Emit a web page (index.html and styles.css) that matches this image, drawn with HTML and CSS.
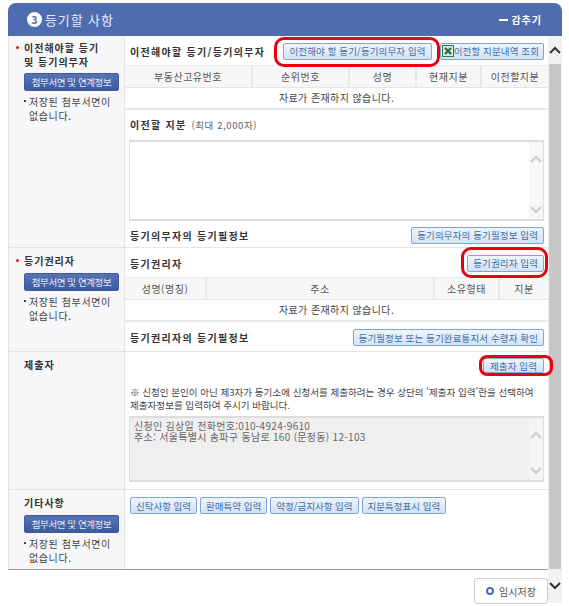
FILE: index.html
```html
<!DOCTYPE html>
<html lang="ko">
<head>
    <meta charset="UTF-8">
    <title>등기할 사항</title>
    <link rel="stylesheet" href="styles.css">
</head>
<body>
    <div class="panel">
        <div class="panel-head">
            <h2><span class="step-num">3</span>등기할 사항</h2>
            <span class="fold"><span class="fold-dash"></span>감추기</span>
        </div>
        <div class="panel-body">
            <div class="main">
                <section class="sec sec-transfer">
                    <div class="side">
                        <p class="side-title req">이전해야할 등기<br>및 등기의무자</p>
                        <button class="attach-btn">첨부서면 및 연계정보</button>
                        <p class="side-note">저장된 첨부서면이<br>없습니다.</p>
                    </div>
                    <div class="cont">
                        <div class="line line-top">
                            <strong>이전해야할 등기/등기의무자</strong>
                            <div class="btns">
                                <span class="ring-wrap">
                                    <button class="btn">이전해야 할 등기/등기의무자 입력</button>
                                    <span class="ring ring-one"></span>
                                </span>
                                <button class="btn btn-excel">
                                    <svg width="12" height="12" viewBox="0 0 12 12"><rect x="0.5" y="0.5" width="11" height="11" fill="#d9e8dc" stroke="#2e7d46"/><path d="M3 3l6 6M9 3l-6 6" stroke="#1d6b38" stroke-width="2"/></svg>
                                    이전할 지분내역 조회
                                </button>
                            </div>
                        </div>
                        <div class="grid grid-a">
                            <div class="th">부동산고유번호</div>
                            <div class="th">순위번호</div>
                            <div class="th">성명</div>
                            <div class="th">현재지분</div>
                            <div class="th">이전할지분</div>
                            <div class="empty">자료가 존재하지 않습니다.</div>
                        </div>
                        <p class="share-title"><strong>이전할 지분</strong> <span>(최대 2,000자)</span></p>
                        <div class="textbox">
                            <div class="textbox-text"></div>
                            <div class="textbox-bar">
                                <svg width="12" height="8" viewBox="0 0 12 8"><path d="M1 7l5-5 5 5" fill="none" stroke="#ccc" stroke-width="2"/></svg>
                                <svg width="12" height="8" viewBox="0 0 12 8"><path d="M1 1l5 5 5-5" fill="none" stroke="#ccc" stroke-width="2"/></svg>
                            </div>
                        </div>
                        <div class="line line-foot">
                            <strong>등기의무자의 등기필정보</strong>
                            <button class="btn">등기의무자의 등기필정보 입력</button>
                        </div>
                    </div>
                </section>

                <section class="sec sec-holder">
                    <div class="side">
                        <p class="side-title req">등기권리자</p>
                        <button class="attach-btn">첨부서면 및 연계정보</button>
                        <p class="side-note">저장된 첨부서면이<br>없습니다.</p>
                    </div>
                    <div class="cont">
                        <div class="line line-top">
                            <strong>등기권리자</strong>
                            <span class="ring-wrap">
                                <button class="btn">등기권리자 입력</button>
                                <span class="ring ring-two"></span>
                            </span>
                        </div>
                        <div class="grid grid-b">
                            <div class="th">성명(명칭)</div>
                            <div class="th">주소</div>
                            <div class="th">소유형태</div>
                            <div class="th">지분</div>
                            <div class="empty">자료가 존재하지 않습니다.</div>
                        </div>
                        <div class="line line-foot2">
                            <strong>등기권리자의 등기필정보</strong>
                            <button class="btn">등기필정보 또는 등기완료통지서 수령자 확인</button>
                        </div>
                    </div>
                </section>

                <section class="sec sec-submit">
                    <div class="side">
                        <p class="side-title">제출자</p>
                    </div>
                    <div class="cont">
                        <div class="line-right">
                            <span class="ring-wrap">
                                <button class="btn">제출자 입력</button>
                                <span class="ring ring-three"></span>
                            </span>
                        </div>
                        <p class="notice">※ 신청인 본인이 아닌 제3자가 등기소에 신청서를 제출하려는 경우 상단의 '제출자 입력'란을 선택하여<br>제출자정보를 입력하여 주시기 바랍니다.</p>
                        <div class="textbox textbox-off">
                            <div class="textbox-text">신청인 김상일 전화번호:010-4924-9610<br>주소: 서울특별시 송파구 동남로 160 (문정동) 12-103</div>
                            <div class="textbox-bar">
                                <svg width="12" height="8" viewBox="0 0 12 8"><path d="M1 7l5-5 5 5" fill="none" stroke="#ccc" stroke-width="2"/></svg>
                                <svg width="12" height="8" viewBox="0 0 12 8"><path d="M1 1l5 5 5-5" fill="none" stroke="#ccc" stroke-width="2"/></svg>
                            </div>
                        </div>
                    </div>
                </section>

                <section class="sec sec-etc">
                    <div class="side">
                        <p class="side-title">기타사항</p>
                        <button class="attach-btn">첨부서면 및 연계정보</button>
                        <p class="side-note">저장된 첨부서면이<br>없습니다.</p>
                    </div>
                    <div class="cont cont-etc">
                        <button class="btn">신탁사항 입력</button>
                        <button class="btn">환매특약 입력</button>
                        <button class="btn">약정/금지사항 입력</button>
                        <button class="btn">지분특정표시 입력</button>
                    </div>
                </section>

                <div class="save-row">
                    <button class="save-btn"><span class="save-dot"></span>임시저장</button>
                </div>
            </div>

            <div class="scrollbar">
                <div class="scroll-arrow scroll-up">
                    <svg width="12" height="8" viewBox="0 0 12 8"><path d="M1 7l5-5 5 5" fill="none" stroke="#333" stroke-width="2"/></svg>
                </div>
                <div class="scroll-thumb"></div>
                <div class="scroll-arrow scroll-down">
                    <svg width="12" height="8" viewBox="0 0 12 8"><path d="M1 1l5 5 5-5" fill="none" stroke="#333" stroke-width="2"/></svg>
                </div>
            </div>
        </div>
    </div>
</body>
</html>
```

FILE: styles.css
```css
* {
    box-sizing: border-box;
}

body {
    margin: 0;
    padding: 3px 0 0 8px;
    background: #fff;
    font-family: "Noto Sans CJK KR", "Noto Sans", sans-serif;
    font-size: 10px;
    color: #444;
}

p {
    margin: 0;
}

button {
    font-family: inherit;
    cursor: pointer;
}

.panel {
    width: 554px;
}

.panel-head {
    height: 33px;
    padding: 0 20px 0 19px;
    display: flex;
    align-items: center;
    justify-content: space-between;
    background: #4e6cae;
    border-radius: 8px 8px 0 0;
    color: #fff;
}

.panel-head h2 {
    margin: 0;
    display: flex;
    align-items: center;
    font-size: 13px;
    font-weight: 400;
    letter-spacing: 0.9px;
    color: #e8edf7;
}

.step-num {
    width: 15px;
    height: 15px;
    margin-right: 3px;
    border-radius: 50%;
    background: #fff;
    color: #4e6cae;
    font-size: 10px;
    font-weight: 700;
    line-height: 15px;
    text-align: center;
    letter-spacing: 0;
}

.fold {
    display: flex;
    align-items: center;
    font-size: 10px;
    font-weight: 700;
    letter-spacing: 1px;
}

.fold-dash {
    width: 9px;
    height: 2px;
    margin-right: 3px;
    background: #fff;
}

.panel-body {
    display: flex;
}

.main {
    width: 540px;
}

.sec {
    display: flex;
    border-bottom: 1px solid #e4e4e4;
}

.sec-transfer {
    height: 212px;
}

.sec-holder {
    height: 104px;
}

.sec-submit {
    height: 138px;
}

.sec-etc {
    height: 80px;
    border-bottom: 1px solid #999;
}

.side {
    width: 117px;
    flex: none;
    padding: 6px 0 0 15px;
    background: #f7f7f9;
    border-left: 1px solid #e4e4e4;
    border-right: 1px solid #e4e4e4;
}

.sec-transfer .side {
    padding-top: 5px;
}

.sec-transfer .attach-btn {
    margin-top: 4px;
}

.side-title {
    position: relative;
    font-weight: 700;
    line-height: 14px;
    color: #333;
    letter-spacing: 1px;
}

.req::before {
    content: "";
    position: absolute;
    left: -8px;
    top: 5px;
    width: 3px;
    height: 3px;
    border-radius: 50%;
    background: #e8131b;
}

.attach-btn {
    display: block;
    width: 95px;
    height: 18px;
    margin: 5px 0 4px;
    padding: 0;
    border: 1px solid #3d5a9c;
    border-radius: 2px;
    background: linear-gradient(#5573b5, #3c5a9f);
    color: #e4e9f5;
    font-size: 9.5px;
    letter-spacing: -0.4px;
    line-height: 16px;
}

.side-note {
    position: relative;
    padding-left: 5px;
    line-height: 13.5px;
    letter-spacing: 0.6px;
}

.side-note::before {
    content: "";
    position: absolute;
    left: 0;
    top: 5px;
    width: 2px;
    height: 2px;
    background: #444;
}

.cont {
    flex: 1;
    min-width: 0;
}

.line {
    display: flex;
    align-items: center;
    justify-content: space-between;
    padding: 0 4px 0 5px;
}

.line strong,
.share-title strong {
    color: #333;
    letter-spacing: 1.3px;
}

.line-top {
    height: 29px;
    padding-top: 1px;
}

.btns {
    display: flex;
    gap: 8px;
}

.btn {
    height: 17px;
    padding: 0 5px;
    display: inline-flex;
    align-items: center;
    gap: 2px;
    border: 1px solid #7fa6d6;
    border-radius: 2px;
    background: linear-gradient(#eef4fc, #d3e2f5);
    color: #3f6fa6;
    font-size: 9.5px;
    letter-spacing: 0.12px;
    white-space: nowrap;
}

.btn-excel {
    padding: 0 4px 0 1px;
    gap: 0;
}

.ring-wrap {
    position: relative;
    display: inline-flex;
}

.ring {
    position: absolute;
    border: 3px solid #e60012;
    pointer-events: none;
}

.ring-one {
    left: -9px;
    right: -8px;
    top: -6px;
    bottom: -7px;
    border-radius: 10px;
}

.ring-two {
    left: -6px;
    right: -4px;
    top: -8px;
    bottom: -6px;
    border-radius: 10px;
}

.ring-three {
    left: -4px;
    right: -9px;
    top: -3px;
    bottom: -3px;
    border-radius: 8px;
}

.grid {
    display: grid;
    border-top: 1px solid #eaeaea;
}

.grid-a {
    grid-template-columns: 128px 97px 67px 65px 66px;
}

.grid-b {
    grid-template-columns: 82px 228px 65px 48px;
}

.th {
    height: 22px;
    background: #f7f7f7;
    border-right: 2px solid #e8e8e8;
    border-bottom: 1px solid #e4e4e4;
    color: #555;
    line-height: 21px;
    text-align: center;
    letter-spacing: 0.5px;
}

.th:nth-last-child(2) {
    border-right: 0;
}

.empty {
    grid-column: 1 / -1;
    height: 22px;
    border-bottom: 2px solid #e8e8e8;
    line-height: 20px;
    text-align: center;
    letter-spacing: 0.4px;
}

.share-title {
    height: 30px;
    padding: 8px 4px 0 5px;
    line-height: 14px;
}

.share-title span {
    margin-left: 2px;
    font-size: 9.5px;
    letter-spacing: 0.6px;
    color: #666;
}

.textbox {
    height: 81px;
    margin: 0 4px;
    display: flex;
    border: 1px solid #ddd;
    border-width: 2px 1px 2px 1px;
}

.textbox-text {
    flex: 1;
    padding: 2px 4px;
    line-height: 11px;
    letter-spacing: 0.3px;
    color: #666;
}

.textbox-bar {
    width: 14px;
    padding: 13px 0 5px;
    display: flex;
    flex-direction: column;
    align-items: center;
    justify-content: space-between;
    background: #f7f7f7;
}

.line-foot {
    height: 27px;
    padding-top: 1px;
}

.line-foot2 {
    height: 31px;
}

.line-right {
    height: 27px;
    padding: 6px 4px 0 0;
    display: flex;
    justify-content: flex-end;
    align-items: flex-start;
}

.line-right .btn {
    height: 15px;
    padding: 0 6px;
}

.notice {
    padding: 7px 4px 0 5px;
    height: 37px;
    font-size: 9.55px;
    line-height: 13px;
    white-space: nowrap;
}

.textbox-off {
    margin-top: 0;
}

.textbox-off .textbox-text {
    background: #efefef;
}

.textbox-off .textbox-bar {
    background: #f4f4f4;
}

.sec-submit .textbox-off {
    height: 66px;
}

.cont-etc {
    padding: 7px 4px 0 5px;
    display: flex;
    align-items: flex-start;
    gap: 3px;
}

.cont-etc .btn {
    letter-spacing: 0;
}

.save-row {
    padding: 8px 0 0;
    display: flex;
    justify-content: flex-end;
}

.save-btn {
    width: 74px;
    height: 26px;
    display: flex;
    align-items: center;
    justify-content: center;
    gap: 5px;
    border: 1px solid #ccc;
    border-radius: 3px;
    background: #fff;
    color: #555;
    font-size: 10px;
}

.save-dot {
    width: 8px;
    height: 8px;
    border: 2px solid #4e6cae;
    border-radius: 50%;
}

.scrollbar {
    width: 14px;
    height: 567px;
    display: flex;
    flex-direction: column;
    background: #f2f2f2;
}

.scroll-arrow {
    flex: none;
    display: flex;
    justify-content: center;
    align-items: center;
}

.scroll-up {
    height: 28px;
}

.scroll-thumb {
    flex: 1;
    margin: 0 1px;
    background: #c8c8c8;
}

.scroll-down {
    height: 34px;
}
```
